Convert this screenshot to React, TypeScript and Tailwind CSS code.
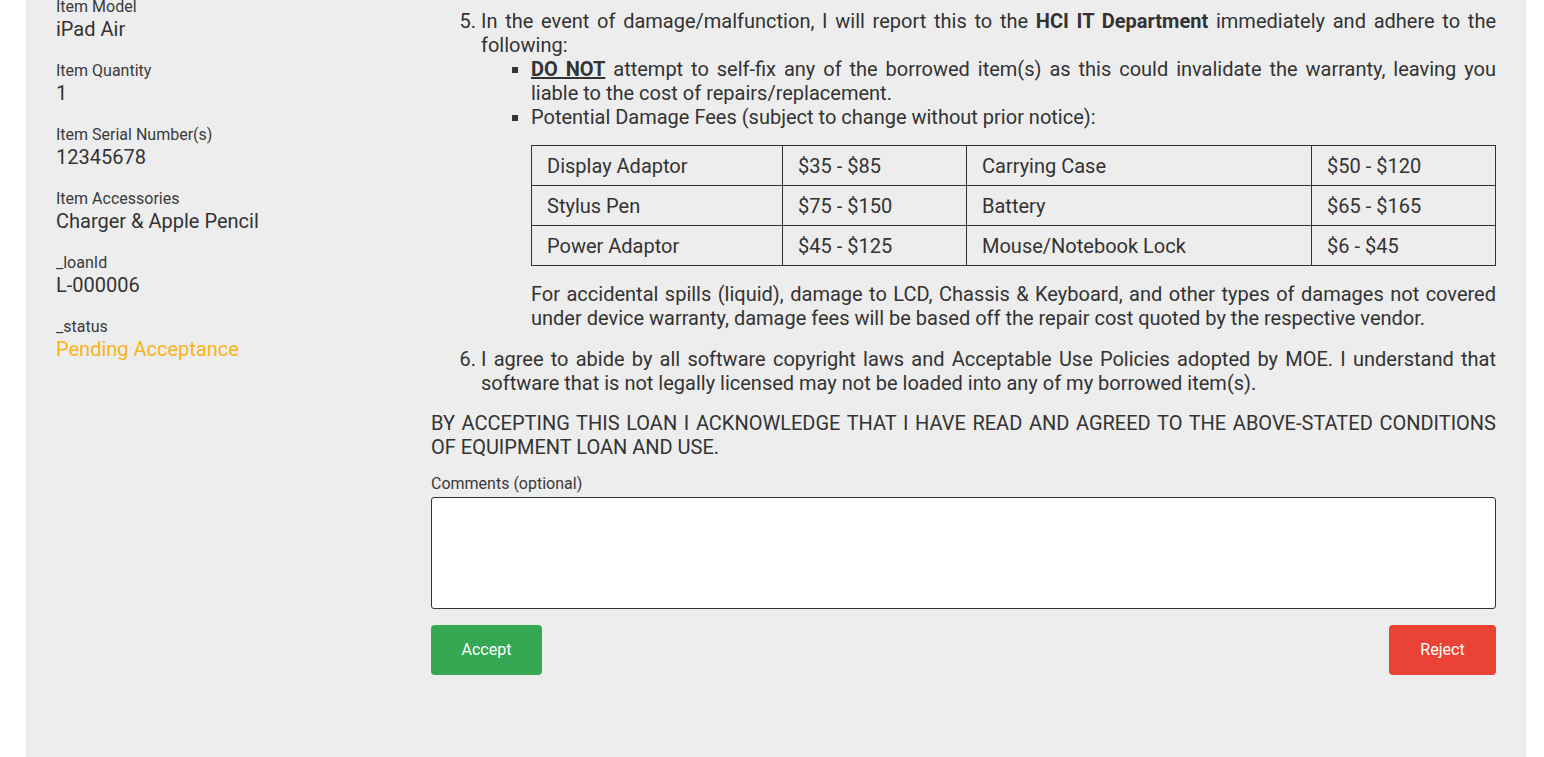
import React from "react"

const details = [
  { label: "Item Model", value: "iPad Air" },
  { label: "Item Quantity", value: "1" },
  { label: "Item Serial Number(s)", value: "12345678" },
  { label: "Item Accessories", value: "Charger & Apple Pencil" },
  { label: "_loanId", value: "L-000006" },
  { label: "_status", value: "Pending Acceptance", status: true },
]

const fees = [
  ["Display Adaptor", "$35 - $85", "Carrying Case", "$50 - $120"],
  ["Stylus Pen", "$75 - $150", "Battery", "$65 - $165"],
  ["Power Adaptor", "$45 - $125", "Mouse/Notebook Lock", "$6 - $45"],
]

const App = () => {
  return (
    <div className="h-[757px] overflow-hidden bg-white font-['Roboto','Liberation_Sans',sans-serif] text-[#333]">
      <div className="ml-[26px] w-[1500px] bg-[#ededed] -mt-[4px] pb-[120px] px-[30px] grid grid-cols-[375px_1fr]">
        <div className="flex flex-col gap-[19px]">
          {details.map((d) => (
            <div key={d.label}>
              <p className="text-[16px] leading-[21px] text-[#3a3a3a]">{d.label}</p>
              <p className={`text-[20px] leading-[24px] ${d.status ? "text-[#f9b418]" : ""}`}>{d.value}</p>
            </div>
          ))}
        </div>

        <div className="pt-[13px] text-[20px] leading-[24px]">
          <ol start={5} className="list-decimal pl-[50px] text-justify">
            <li>
              In the event of damage/malfunction, I will report this to the <b className="font-bold">HCI IT Department</b> immediately and adhere to the following:
              <ul className="list-[square] pl-[50px]">
                <li>
                  <b className="font-bold underline">DO NOT</b> attempt to self-fix any of the borrowed item(s) as this could invalidate the warranty, leaving you liable to the cost of repairs/replacement.
                </li>
                <li>
                  Potential Damage Fees (subject to change without prior notice):
                  <table className="mt-[16px] w-full border-collapse border border-[#333]">
                    <tbody>
                      {fees.map((row) => (
                        <tr key={row[0]} className="h-[40px]">
                          <td className="w-[251px] border border-[#333] px-[15px] text-left">{row[0]}</td>
                          <td className="w-[184px] border border-[#333] px-[15px] text-left">{row[1]}</td>
                          <td className="w-[345px] border border-[#333] px-[15px] text-left">{row[2]}</td>
                          <td className="border border-[#333] px-[15px] text-left">{row[3]}</td>
                        </tr>
                      ))}
                    </tbody>
                  </table>
                  <p className="mt-[16px]">
                    For accidental spills (liquid), damage to LCD, Chassis &amp; Keyboard, and other types of damages not covered under device warranty, damage fees will be based off the repair cost quoted by the respective vendor.
                  </p>
                </li>
              </ul>
            </li>
            <li className="mt-[17px]">
              I agree to abide by all software copyright laws and Acceptable Use Policies adopted by MOE. I understand that software that is not legally licensed may not be loaded into any of my borrowed item(s).
            </li>
          </ol>

          <p className="mt-[16px] text-justify">
            BY ACCEPTING THIS LOAN I ACKNOWLEDGE THAT I HAVE READ AND AGREED TO THE ABOVE-STATED CONDITIONS OF EQUIPMENT LOAN AND USE.
          </p>

          <label className="block mt-[14px] text-[16px] leading-[21px] text-[#3a3a3a]">Comments (optional)</label>
          <textarea className="mt-[3px] block w-full h-[112px] bg-white border border-[#333] rounded-[3px] resize-none outline-none p-2" />

          <div className="mt-[16px] flex justify-between">
            <button className="w-[111px] h-[50px] rounded-[4px] bg-[#34a853] text-white text-[16px]">Accept</button>
            <button className="w-[107px] h-[50px] rounded-[4px] bg-[#ea4335] text-white text-[16px]">Reject</button>
          </div>
        </div>
      </div>
    </div>
  )
}

export default App
